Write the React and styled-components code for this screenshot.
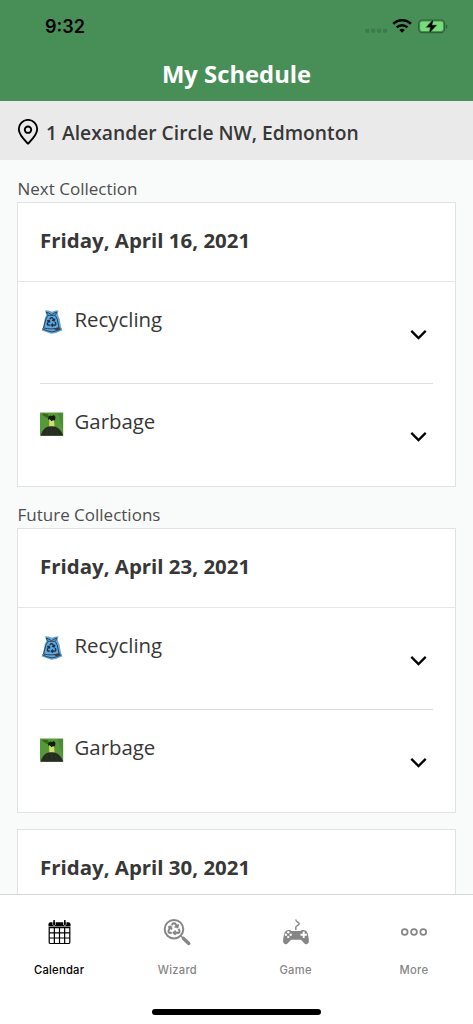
import React from 'react';
import styled, { createGlobalStyle } from 'styled-components';
import { FaRecycle } from 'react-icons/fa';

const StatusIcons = () => (
  <svg width="84" height="20" viewBox="0 0 84 20">
    <g fill="#3b7a4a">
      <rect x="1.3" y="12.7" width="4" height="4" rx="1.2" />
      <rect x="7.2" y="12.7" width="4" height="4" rx="1.2" />
      <rect x="13.1" y="12.7" width="4" height="4" rx="1.2" />
      <rect x="19" y="12.7" width="4" height="4" rx="1.2" />
    </g>
    <g fill="none" stroke="#000" strokeWidth="2.6">
      <path d="M29.3 7.8a12.6 12.6 0 0 1 17.6 0" />
      <path d="M32.7 11.4a7.8 7.8 0 0 1 10.8 0" />
    </g>
    <path d="M35.4 14a3.8 3.8 0 0 1 5.4 0l-2.7 2.8z" />
    <rect x="54.6" y="4" width="26" height="12.6" rx="3.6" fill="none" stroke="#2c6039" strokeWidth="1.1" />
    <rect x="56.2" y="5.6" width="22.8" height="9.4" rx="2" fill="#78dc78" />
    <path d="M82 8.4v4.2c1.8-.6 1.8-3.6 0-4.2z" fill="#2c6039" />
    <path d="M69.3 3.4l-6.9 7.8h4.3l-1.6 6 7.3-7.9h-4.6z" stroke="#488f57" strokeWidth="1.2" paintOrder="stroke" />
  </svg>
);

const PinIcon = () => (
  <svg width="22" height="28" viewBox="0 0 22 28" fill="none" stroke="#000" strokeWidth="1.9">
    <path
      strokeLinejoin="round"
      d="M11 24.7C7.6 21.3 1.8 16 1.8 10.1a9.2 9.2 0 0 1 18.4 0c0 5.9-5.8 11.2-9.2 14.6z"
    />
    <circle cx="11" cy="10.7" r="3.2" />
  </svg>
);

const RecyclingIcon = () => (
  <svg width="24" height="24" viewBox="0 0 24 24">
    <path
      d="M5 .3l3.500.3 3.500 1.100 3.500-1.200 3 0-.9 3.500 2 5 1.400 8 1.500 3.200-6.500 2.700-4.800.8-9.400-3.200 1.300-3.500 1.800-9 1.500-3z"
      fill="#62a6dc"
    />
    <g fill="none" stroke="#2b4559" strokeWidth="1">
      <path d="M7.600 4.800L6.300 2l2.800 1.200 2.400 1.600 2.400-1.600L16.700 2l-1 2.800" />
      <path d="M8 5.300h7.200l1.900 3.500 2 9c-5 1.400-10.500 1.400-15.500.2l2.300-9z" />
      <path d="M2.300 18.800l4.500 1.900 5.300 1.200 4.800-1.200 4.300-1.800" />
    </g>
    <path d="M13.500 18.500l5.800-1.200.9 1.900-4.200 1.100z" fill="#3b3b40" />
    <FaRecycle x="6.6" y="7" width="10" height="10" size={10} color="#17324a" stroke="#17324a" strokeWidth={14} />
  </svg>
);

const GarbageIcon = () => (
  <svg width="24" height="24" viewBox="0 0 24 24">
    <path d="M0 .5h23.200v23.200H0z" fill="#56993a" />
    <path d="M17.500 1h5.200v16z" fill="#4b8b36" />
    <path d="M2 1.500l5.500.5 2.500 3.500-3 .5-4-2.500z" fill="#38691f" />
    <path d="M9.200 7h4.800l.5 7.500H9.200z" fill="#d5df70" />
    <path d="M8.300 5l2-1.500 1.700.6 2-1 1.500 2-.5 3.200-2.600.2-1 .8-1.600-2-1.800.4z" fill="#101e10" />
    <path d="M.8 23.700c1.400-6.300 5.200-9.400 10.700-9.400s9.500 3.100 11.700 9.400z" fill="#262c22" />
    <path d="M8 17l-2 6.700M11.500 15l.5 8M15 17l3 6" stroke="#31392a" strokeWidth=".7" />
  </svg>
);

const ChevronIcon = () => (
  <svg width="18" height="12" viewBox="0 0 18 12">
    <path d="M1.300 1.900L8.500 9.100l7.200-7.200" fill="none" stroke="#000" strokeWidth="2.3" />
  </svg>
);

const CalendarIcon = () => (
  <svg width="30" height="30" viewBox="0 0 30 30">
    <path d="M4.500 9.500V7.200q0-1.900 1.900-1.900h18.200q1.900 0 1.900 1.900v2.300z" />
    <path d="M8.800 5v2.700q1.300 1.800 2.600 0V5M19.500 5v2.700q1.300 1.800 2.600 0V5" fill="none" stroke="#fff" strokeWidth=".7" />
    <path d="M10.100 3v4.800M20.800 3v4.800" stroke="#000" strokeWidth="1.5" />
    <path
      d="M5.200 10.700h20.600v14.700q0 1.100-1.100 1.100H6.300q-1.100 0-1.100-1.100zM5.200 15.900h20.600M5.200 21h20.600M10.350 10.700v15.700M15.500 10.700v15.700M20.650 10.700v15.700"
      fill="none"
      stroke="#000"
      strokeWidth="1.2"
    />
  </svg>
);

const WizardIcon = () => (
  <svg width="30" height="30" viewBox="0 0 30 30" color="#868686">
    <circle cx="12" cy="12.2" r="9.3" fill="none" stroke="currentColor" strokeWidth="2" />
    <path d="M18.900 19l2.500 2.300" stroke="currentColor" strokeWidth="1.5" />
    <path d="M21.500 21.400l5.300 5" stroke="currentColor" strokeWidth="3.4" strokeLinecap="round" />
    <FaRecycle x="5.5" y="5.3" width="13" height="13" size={13} stroke="currentColor" strokeWidth={24} />
  </svg>
);

const GameIcon = () => (
  <svg width="30" height="30" viewBox="0 0 30 30">
    <path d="M14.800 13V10.300c0-1.900 3.400-1.500 3.400-3.700 0-1.700-3.300-1.500-3.300-3.500V2.400" fill="none" stroke="#868686" strokeWidth="1.4" />
    <path
      d="M6.500 13.200c1.700-.5 3.300-.3 4.300.9h8.400c1-1.200 2.600-1.400 4.300-.9 2.200.6 2.900 2.100 3.500 4.500.6 2.500 1.100 5.500.8 7.400-.5 2.500-3.300 2.700-4.900.8L20 22.700H10L7.100 25.900c-1.600 1.900-4.400 1.700-4.900-.8-.3-1.900.2-4.900.8-7.400.6-2.400 1.300-3.900 3.500-4.500z"
      fill="#868686"
    />
    <g fill="#fff">
      <circle cx="7.3" cy="15.3" r="1.2" />
      <circle cx="7.3" cy="20.1" r="1.2" />
      <circle cx="4.9" cy="17.7" r="1.2" />
      <circle cx="9.7" cy="17.7" r="1.2" />
    </g>
    <path d="M22.700 14.500v6.400M19.500 17.700h6.400" stroke="#fff" strokeWidth="1.9" />
  </svg>
);

const MoreIcon = () => (
  <svg width="30" height="30" viewBox="0 0 30 30" fill="none" stroke="#868686" strokeWidth="1.7">
    <circle cx="5.7" cy="15" r="2.9" />
    <circle cx="15" cy="15" r="2.9" />
    <circle cx="24.3" cy="15" r="2.9" />
  </svg>
);

const wasteTypes = [
  { name: 'Recycling', Icon: RecyclingIcon },
  { name: 'Garbage', Icon: GarbageIcon },
];

const collections = [
  { date: 'Friday, April 16, 2021', label: 'Next Collection', items: wasteTypes },
  { date: 'Friday, April 23, 2021', label: 'Future Collections', items: wasteTypes },
  { date: 'Friday, April 30, 2021', items: [] },
];

const tabs = [
  { name: 'Calendar', Icon: CalendarIcon, active: true },
  { name: 'Wizard', Icon: WizardIcon },
  { name: 'Game', Icon: GameIcon },
  { name: 'More', Icon: MoreIcon },
];

const Collection = ({ date, label, items }) => (
  <Section>
    {label && <Label>{label}</Label>}
    <Card>
      <CardDate>{date}</CardDate>
      {items.map(({ name, Icon }) => (
        <Item key={name}>
          <Icon />
          <ItemName>{name}</ItemName>
          <ChevronIcon />
        </Item>
      ))}
    </Card>
  </Section>
);

const App = () => (
  <Screen>
    <GlobalStyle />
    <Header>
      <StatusBar>
        <Time>9:32</Time>
        <StatusIcons />
      </StatusBar>
      <Title>My Schedule</Title>
    </Header>
    <Address>
      <PinIcon />
      <AddressText>1 Alexander Circle NW, Edmonton</AddressText>
    </Address>
    <Schedule>
      {collections.map((item) => (
        <Collection key={item.date} {...item} />
      ))}
    </Schedule>
    <TabBar>
      <Tabs>
        {tabs.map(({ name, Icon, active }) => (
          <Tab key={name} $active={active}>
            <Icon />
            <TabName>{name}</TabName>
          </Tab>
        ))}
      </Tabs>
      <HomeIndicator />
    </TabBar>
  </Screen>
);

const GlobalStyle = createGlobalStyle`
  * {
    box-sizing: border-box;
  }
  body {
    margin: 0;
    overflow: hidden;
  }
`;

const Screen = styled.div`
  display: flex;
  flex-direction: column;
  height: 1024px;
  overflow: hidden;
  background: #f9fbfa;
  color: #373737;
  font-family: 'Open Sans', 'Noto Sans', sans-serif;
`;

const Header = styled.header`
  flex: none;
  height: 101px;
  background: #488f57;
`;

const StatusBar = styled.div`
  display: flex;
  height: 52px;
  padding: 0 25px 0 45px;
  justify-content: space-between;
  align-items: center;
`;

const Time = styled.div`
  padding-top: 2px;
  color: #000;
  font: 600 18px/24px Inter, sans-serif;
`;

const Title = styled.h1`
  margin: 6px 0 0;
  color: #fff;
  font-size: 23.8px;
  font-weight: 700;
  line-height: 32px;
  text-align: center;
`;

const Address = styled.div`
  display: flex;
  flex: none;
  height: 59px;
  padding: 4px 17px 0;
  align-items: center;
  background: #eaeaea;
`;

const AddressText = styled.div`
  margin-left: 7px;
  font-size: 19.25px;
  font-weight: 600;
  white-space: nowrap;
`;

const Schedule = styled.main`
  flex: 1;
  min-height: 0;
  padding: 17px 17px 0;
  overflow: hidden;
`;

const Section = styled.section`
  margin-bottom: 16px;
`;

const Label = styled.div`
  height: 25px;
  padding-left: 0.5px;
  color: #4e4e4e;
  font-size: 17px;
  line-height: 23px;
`;

const Card = styled.div`
  height: 285px;
  border: 1px solid #e1e2e2;
  background: #fff;
`;

const CardDate = styled.h2`
  height: 79px;
  margin: 0;
  padding: 22px 22px 0;
  border-bottom: 1px solid #e6e6e6;
  font-size: 20.45px;
  font-weight: 700;
  line-height: 30px;
`;

const Item = styled.div`
  display: grid;
  height: 101px;
  margin: 0 22px;
  padding: 26px 5px 0 0;
  grid-template-columns: 24px 1fr 18px;
  align-items: start;
  & > svg:first-child {
    margin-top: 2px;
  }
  & > svg:last-child {
    margin-top: 21px;
  }
  & + & {
    height: 102px;
    border-top: 1px solid #dedede;
  }
`;

const ItemName = styled.div`
  margin-top: -5px;
  padding-left: 10.5px;
  font-size: 20.4px;
  line-height: 32px;
`;

const TabBar = styled.footer`
  display: flex;
  flex: none;
  flex-direction: column;
  height: 130px;
  align-items: center;
  border-top: 1px solid #d6d6d6;
  background: #fff;
`;

const Tabs = styled.nav`
  display: flex;
  width: 100%;
  height: 113px;
`;

const Tab = styled.div`
  display: flex;
  flex: 1;
  flex-direction: column;
  padding-top: 22px;
  align-items: center;
  color: ${({ $active }) => ($active ? '#000' : '#868686')};
`;

const TabName = styled.div`
  margin-top: 14px;
  font: 500 11.2px/18px Inter, sans-serif;
  letter-spacing: 0.25px;
`;

const HomeIndicator = styled.div`
  width: 169px;
  height: 6px;
  margin-top: 1px;
  border-radius: 3px;
  background: #000;
`;

export default App;
